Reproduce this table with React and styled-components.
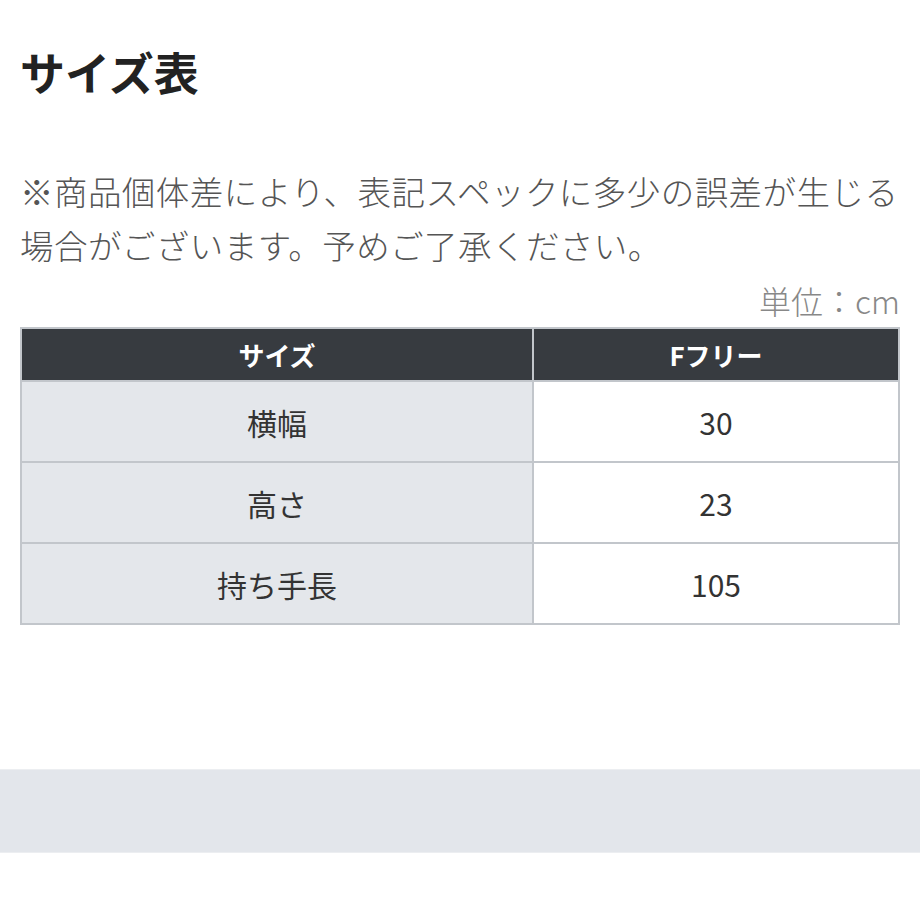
import React from 'react';
import styled, { createGlobalStyle } from 'styled-components';

const GlobalStyle = createGlobalStyle`
  html, body {
    margin: 0;
    padding: 0;
    background: #fff;
  }
  body {
    font-family: "Noto Sans CJK JP", "Noto Sans", sans-serif;
  }
`;

const Page = styled.div`
  width: 920px;
  padding-top: 40px;
`;

const Section = styled.section`
  padding: 0 20px;
`;

const Title = styled.h2`
  margin: 0;
  font-size: 45px;
  line-height: 63px;
  font-weight: 700;
  color: #222;
`;

const Note = styled.p`
  margin: 61px 0 0;
  font-size: 33.5px;
  letter-spacing: 0.45px;
  line-height: 54px;
  font-weight: 300;
  color: #555;
`;

const Unit = styled.div`
  margin-top: 8px;
  text-align: right;
  font-size: 32px;
  line-height: 40px;
  font-weight: 300;
  color: #888;
`;

const SizeTable = styled.div`
  margin-top: 7px;
  display: grid;
  grid-template-columns: 510px 1fr;
  grid-template-rows: 51px repeat(3, 79px);
  gap: 2px;
  padding: 2px;
  background: #c2c6cb;
`;

const Cell = styled.div`
  display: flex;
  align-items: center;
  justify-content: center;
  background: ${(p) => (p.$head ? '#373b40' : p.$label ? '#e4e7eb' : '#fff')};
  color: ${(p) => (p.$head ? '#fff' : '#333')};
  font-size: ${(p) => (p.$head ? '26px' : '30px')};
  font-weight: ${(p) => (p.$head ? 700 : 400)};
`;

const Band = styled.div`
  margin-top: 144px;
  height: 82px;
  background: #e3e6eb;
  border-top: 1px solid #eceef1;
  border-bottom: 1px solid #eceef1;
`;

const rows = [
  ['横幅', '30'],
  ['高さ', '23'],
  ['持ち手長', '105'],
];

export default function App() {
  return (
    <>
      <GlobalStyle />
      <Page>
        <Section>
          <Title>サイズ表</Title>
          <Note>
            ※商品個体差により、表記スペックに多少の誤差が生じる場合がございます。予めご了承ください。
          </Note>
          <Unit>単位：cm</Unit>
          <SizeTable>
            <Cell $head>サイズ</Cell>
            <Cell $head>Fフリー</Cell>
            {rows.map(([label, value]) => (
              <React.Fragment key={label}>
                <Cell $label>{label}</Cell>
                <Cell>{value}</Cell>
              </React.Fragment>
            ))}
          </SizeTable>
        </Section>
        <Band />
      </Page>
    </>
  );
}
